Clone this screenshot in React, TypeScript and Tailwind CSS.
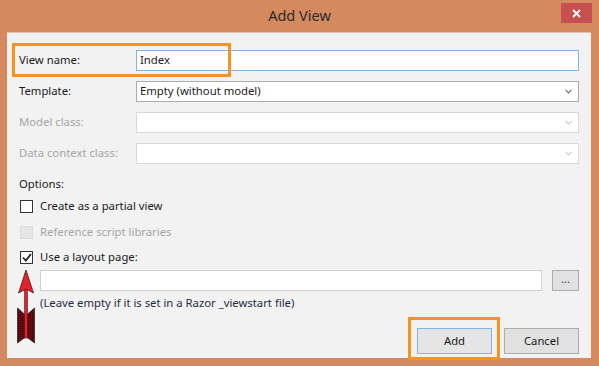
import React from "react";

const font = { fontFamily: '"Segoe UI", "Noto Sans", "Open Sans", sans-serif' };

function Chevron({ disabled }: { disabled?: boolean }) {
  return (
    <svg width="7" height="5" viewBox="0 0 7 5" className="mr-[6px]">
      <path d="M0.5 0.8 L3.5 3.8 L6.5 0.8" fill="none" stroke={disabled ? "#cccccc" : "#707070"} strokeWidth="1.2" />
    </svg>
  );
}

function Row({ label, disabled, children }: { label: string; disabled?: boolean; children: React.ReactNode }) {
  return (
    <div className="flex items-center h-[21px]">
      <div className={`w-[117px] shrink-0 ${disabled ? "text-[#a6a6a6]" : "text-[#1a1a1a]"}`}>{label}</div>
      {children}
    </div>
  );
}

function Select({ value, disabled }: { value?: string; disabled?: boolean }) {
  return (
    <div
      className={`flex-1 h-[21px] bg-white border flex items-center justify-between ${
        disabled ? "border-[#d9d9d9]" : "border-[#acacac]"
      }`}
    >
      <span className="pl-[3px] text-[#1a1a1a]">{value ?? ""}</span>
      <Chevron disabled={disabled} />
    </div>
  );
}

function Check({ checked, disabled, label }: { checked?: boolean; disabled?: boolean; label: string }) {
  return (
    <div className="flex items-center h-[16px] ml-[1px]">
      <div
        className={`w-[13px] h-[13px] border flex items-center justify-center ${
          disabled ? "border-[#dcdcdc] bg-[#e6e6e6]" : "border-[#333] bg-white"
        }`}
      >
        {checked && (
          <svg width="10" height="9" viewBox="0 0 10 9">
            <path d="M1 4.5 L3.8 7.5 L9 1" fill="none" stroke="#222" strokeWidth="1.8" />
          </svg>
        )}
      </div>
      <span className={`ml-[7px] ${disabled ? "text-[#a6a6a6]" : "text-[#1a1a1a]"}`}>{label}</span>
    </div>
  );
}

function Arrow() {
  return (
    <svg width="20" height="77" viewBox="0 0 20 77" className="absolute left-[16px] top-[268px]">
      <defs>
        <pattern id="hatch" width="2" height="2" patternUnits="userSpaceOnUse">
          <rect width="2" height="2" fill="#6a0c10" />
          <rect width="1" height="1" fill="#2a0406" />
        </pattern>
      </defs>
      <polygon points="1.5,40 9.5,47 9.5,69 1.5,75" fill="url(#hatch)" stroke="#2a2a2a" strokeWidth="0.8" />
      <polygon points="18.5,40 10.5,47 10.5,69 18.5,75" fill="url(#hatch)" stroke="#2a2a2a" strokeWidth="0.8" />
      <rect x="8.5" y="20" width="3" height="50" fill="#e3202b" stroke="#4a1a1a" strokeWidth="0.6" />
      <polygon points="10,2 17.5,25 10,21 2.5,25" fill="#e3202b" stroke="#3a2222" strokeWidth="0.8" />
    </svg>
  );
}

export default function App() {
  return (
    <div className="relative w-[599px] h-[366px] bg-[#d4895f] overflow-hidden text-[11.3px]" style={font}>
      {/* title bar */}
      <div className="h-[32px] flex items-center justify-center relative">
        <span className="text-[14.5px] text-[#2b2b2b] -mt-[1px]">Add View</span>
        <div className="absolute right-[7px] top-[3px] w-[31px] h-[20px] bg-[#c75050] flex items-center justify-center">
          <svg width="9" height="9" viewBox="0 0 9 9">
            <path d="M1 1 L8 8 M8 1 L1 8" stroke="#fff" strokeWidth="1.8" />
          </svg>
        </div>
      </div>

      {/* client */}
      <div className="ml-[7px] mr-[8px] h-[326px] bg-[#f2f2f2] border-t border-[#e0c0b0] px-[12px] pt-[17px] flex flex-col">
        <Row label="View name:">
          <div className="flex-1 h-[21px] bg-white border border-[#7eb4ea] flex items-center pl-[3px] text-[#1a1a1a]">
            Index
          </div>
        </Row>
        <div className="mt-[10px]">
          <Row label="Template:">
            <Select value="Empty (without model)" />
          </Row>
        </div>
        <div className="mt-[10px]">
          <Row label="Model class:" disabled>
            <Select disabled />
          </Row>
        </div>
        <div className="mt-[10px]">
          <Row label="Data context class:" disabled>
            <Select disabled />
          </Row>
        </div>

        <div className="mt-[12px] h-[16px] flex items-center text-[#1a1a1a]">Options:</div>
        <div className="mt-[6px]">
          <Check label="Create as a partial view" />
        </div>
        <div className="mt-[10px]">
          <Check label="Reference script libraries" disabled />
        </div>
        <div className="mt-[9px]">
          <Check label="Use a layout page:" checked />
        </div>
        <div className="mt-[5px] ml-[21px] flex items-center">
          <div className="flex-1 h-[21px] bg-white border border-[#d0d0d0]" />
          <div className="ml-[10px] w-[27px] h-[21px] bg-[#e1e1e1] border border-[#adadad] flex items-center justify-center text-[#333] leading-none pb-[4px]">
            ...
          </div>
        </div>
        <div className="mt-[4px] ml-[21px] h-[16px] flex items-center text-[#1e2d42]">
          (Leave empty if it is set in a Razor _viewstart file)
        </div>
        <div className="mt-[17px] flex justify-end gap-[12px]">
          <div className="w-[75px] h-[26px] bg-[#e5e5e5] border border-[#7eb4ea] flex items-center justify-center text-[#1a1a1a]">
            Add
          </div>
          <div className="w-[75px] h-[26px] bg-[#e1e1e1] border border-[#adadad] flex items-center justify-center text-[#1a1a1a]">
            Cancel
          </div>
        </div>
      </div>

      {/* annotations */}
      <div className="absolute left-[12px] top-[43px] w-[219px] h-[34px] border-[3px] border-[#f7931e]" />
      <div className="absolute left-[408px] top-[317px] w-[92px] h-[43px] border-[3px] border-[#f7931e]" />
      <Arrow />
    </div>
  );
}
